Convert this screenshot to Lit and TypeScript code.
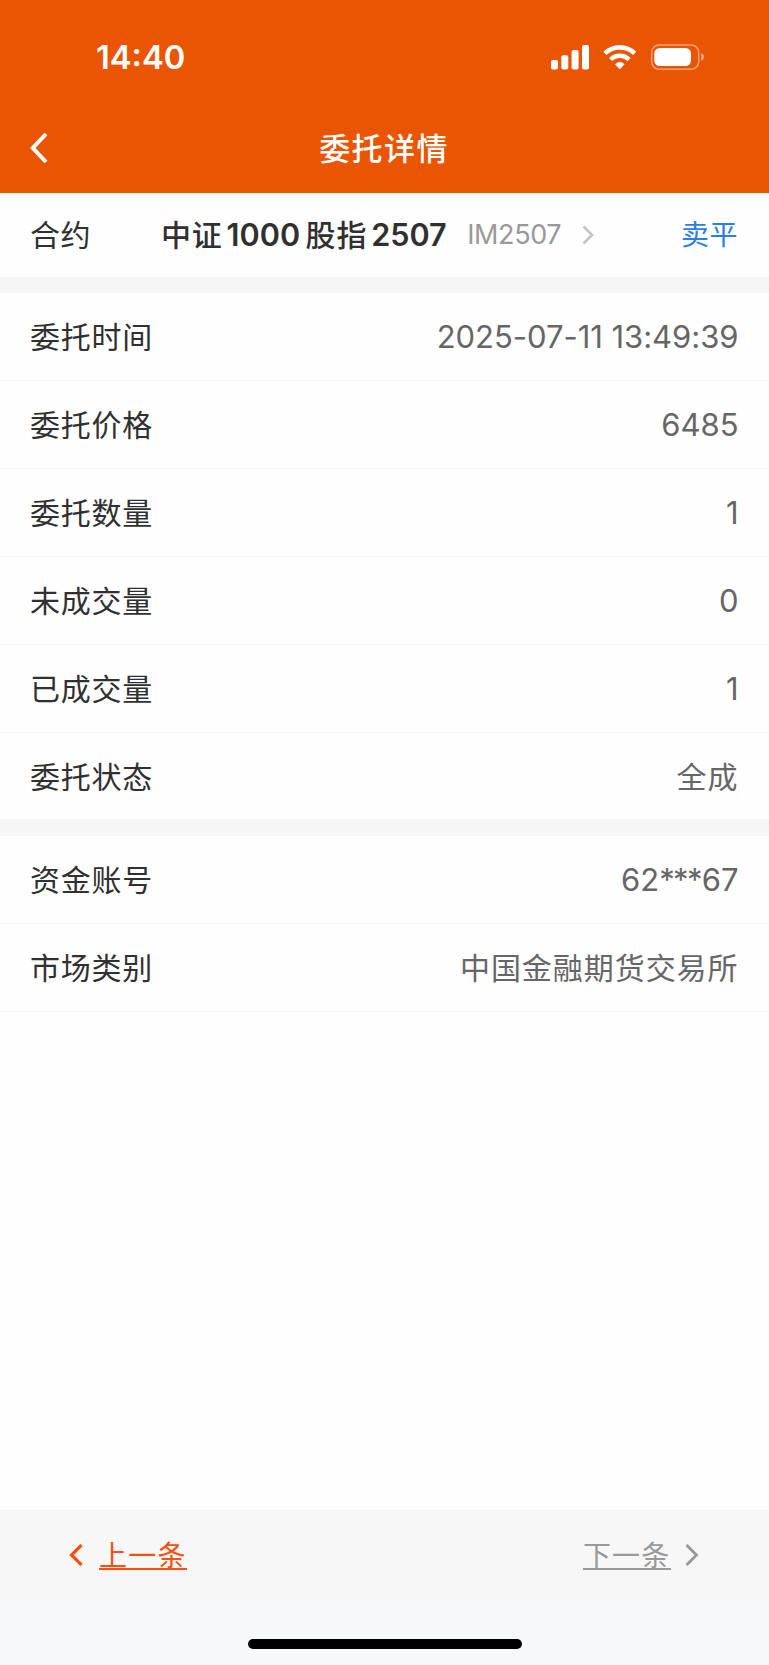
import { LitElement, html, css } from "lit";
import { customElement, property } from "lit/decorators.js";

@customElement("detail-row")
class DetailRow extends LitElement {
  @property() label = "";
  @property() value = "";
  static styles = css`
    :host {
      display: flex;
      box-sizing: border-box;
      height: 88px;
      padding: 0 31px 0 30px;
      border-bottom: 1px solid #f4f4f4;
      align-items: center;
      justify-content: space-between;
      font-size: 30px;
      line-height: 44px;
    }
    .label { color: #303030; letter-spacing: 0.75px; }
    .value { color: #666; letter-spacing: 0.95px; margin-right: -0.5px; }
    .value.num { letter-spacing: -0.03px; font-size: 31px; }
    .mask { letter-spacing: -1.6px; margin-right: 0.8px; }
  `;
  render() {
    const num = /^[\x20-\x7e]+$/.test(this.value);
    const parts = this.value.split(/(\*+)/);
    return html`<span class="label">${this.label}</span
      ><span class="value ${num ? "num" : ""}"
        >${parts.map((p) => (p.startsWith("*") ? html`<span class="mask">${p}</span>` : p))}</span
      >`;
  }
}

@customElement("app-root")
class AppRoot extends LitElement {
  static styles = css`
    :host {
      display: flex;
      flex-direction: column;
      width: 769px;
      height: 1665px;
      background: #fefefe;
      font-family: Inter, "Noto Sans CJK SC", sans-serif;
      overflow: hidden;
    }
    svg { display: block; flex: none; }
    .status {
      height: 104px;
      background: #ea5504;
      display: flex;
      align-items: center;
      justify-content: space-between;
      padding: 12px 64px 0 96px;
      box-sizing: border-box;
      color: #fff;
    }
    .clock { font-size: 32.7px; font-weight: 600; line-height: 40px; margin-bottom: 2px; }
    .nav {
      height: 89px;
      background: #ea5504;
      display: grid;
      grid-template-columns: 60px 1fr 60px;
      align-items: center;
      color: #fff;
    }
    .back { padding: 0 0 2px 30px; }
    .title { text-align: center; font-size: 31px; font-weight: 500; letter-spacing: 1.4px; line-height: 44px; margin-right: 1px; }
    .contract {
      height: 84px;
      flex: none;
      box-sizing: border-box;
      padding: 0 31px 1px 30px;
      display: flex;
      align-items: center;
      line-height: 44px;
      font-size: 30px;
      color: #303030;
    }
    .contract .label { width: 131px; letter-spacing: 0.6px; }
    .name { display: flex; font-weight: 600; letter-spacing: 0.8px; }
    .name .cjk { font-weight: 500; }
    .name .digits { margin: 0 5.5px 0 4px; letter-spacing: 0; font-size: 30.6px; }
    .code { margin-left: 15px; font-size: 27px; letter-spacing: -0.4px; color: #999; }
    .arrow { margin-left: 21px; }
    .side { margin-left: auto; color: #2b7de6; font-size: 28px; letter-spacing: 0.5px; }
    .gap { height: 16px; background: #f6f6f6; flex: none; }
    .gap.wide { height: 17px; margin-top: -2px; }
    .fill { flex: 1; }
    .pager {
      height: 87px;
      background: #f7f7f7;
      display: flex;
      align-items: center;
      justify-content: space-between;
      padding: 2px 70.5px 0 69px;
      font-size: 28px;
      border-top: 1px solid #f2f2f2;
      box-sizing: border-box;
    }
    .link { display: flex; align-items: center; }
    .link .text { letter-spacing: 1.2px; border-bottom: 2px solid currentColor; line-height: 31px; height: 27px; }
    .prev { color: #fe4e0c; gap: 16px; }
    .next { color: #999; gap: 14px; }
    .home {
      height: 68px;
      background: #f7f8fa;
      display: flex;
      justify-content: center;
      align-items: flex-start;
      padding-top: 42px;
      box-sizing: border-box;
    }
    .bar { width: 274px; height: 10px; border-radius: 5px; background: #000; }
  `;
  render() {
    return html`
      <div class="status">
        <span class="clock">14:40</span>
        <svg width="154" height="28" viewBox="0 0 154 28" fill="#fff">
          <rect x="0" y="16" width="7" height="9.5" rx="2" />
          <rect x="10.3" y="11.2" width="7" height="14.3" rx="2" />
          <rect x="20.6" y="6" width="7" height="19.5" rx="2" />
          <rect x="31" y="1" width="7" height="24.5" rx="2" />
          <g fill="none" stroke="#fff" stroke-width="4.6">
            <path d="M53.9 9.4A21.4 21.4 0 0 1 83.7 9.4" />
            <path d="M59.6 15.5A13 13 0 0 1 78 15.5" />
          </g>
          <path d="M64 20.2Q68.8 15.6 73.6 20.2L69.4 24.8Q68.8 25.4 68.2 24.8Z" />
          <rect x="100.7" y="0.9" width="47" height="24.4" rx="7.5" fill="none" stroke="#fff" stroke-opacity=".45" stroke-width="1.5" />
          <rect x="103.3" y="4" width="36.7" height="18" rx="5.5" />
          <path d="M150.3 9Q153 10.2 153 13T150.3 17Z" fill-opacity=".5" />
        </svg>
      </div>
      <div class="nav">
        <svg class="back" width="18" height="30" viewBox="0 0 18 30" fill="none" stroke="#fff" stroke-width="4">
          <path d="M16 1L2.8 15L16 29" />
        </svg>
        <span class="title">委托详情</span>
      </div>
      <div class="contract">
        <span class="label">合约</span>
        <span class="name"
          ><span class="cjk">中证</span><span class="digits">1000</span><span class="cjk">股指</span
          ><span class="digits">2507</span></span
        >
        <span class="code">IM2507</span>
        <svg class="arrow" width="12" height="20" viewBox="0 0 12 20" fill="none" stroke="#c4c4c4" stroke-width="2.6">
          <path d="M1.5 1.5L10 10L1.5 18.5" />
        </svg>
        <span class="side">卖平</span>
      </div>
      <div class="gap"></div>
      <detail-row label="委托时间" value="2025-07-11 13:49:39"></detail-row>
      <detail-row label="委托价格" value="6485"></detail-row>
      <detail-row label="委托数量" value="1"></detail-row>
      <detail-row label="未成交量" value="0"></detail-row>
      <detail-row label="已成交量" value="1"></detail-row>
      <detail-row label="委托状态" value="全成"></detail-row>
      <div class="gap wide"></div>
      <detail-row label="资金账号" value="62***67"></detail-row>
      <detail-row label="市场类别" value="中国金融期货交易所"></detail-row>
      <div class="fill"></div>
      <div class="pager">
        <span class="link prev">
          <svg width="14" height="22" viewBox="0 0 14 22" fill="none" stroke="currentColor" stroke-width="3.2">
            <path d="M12.5 1L2.5 11L12.5 21" />
          </svg>
          <span class="text">上一条</span>
        </span>
        <span class="link next">
          <span class="text">下一条</span>
          <svg width="14" height="22" viewBox="0 0 14 22" fill="none" stroke="currentColor" stroke-width="2.8">
            <path d="M1.5 1L11.5 11L1.5 21" />
          </svg>
        </span>
      </div>
      <div class="home"><div class="bar"></div></div>
    `;
  }
}
